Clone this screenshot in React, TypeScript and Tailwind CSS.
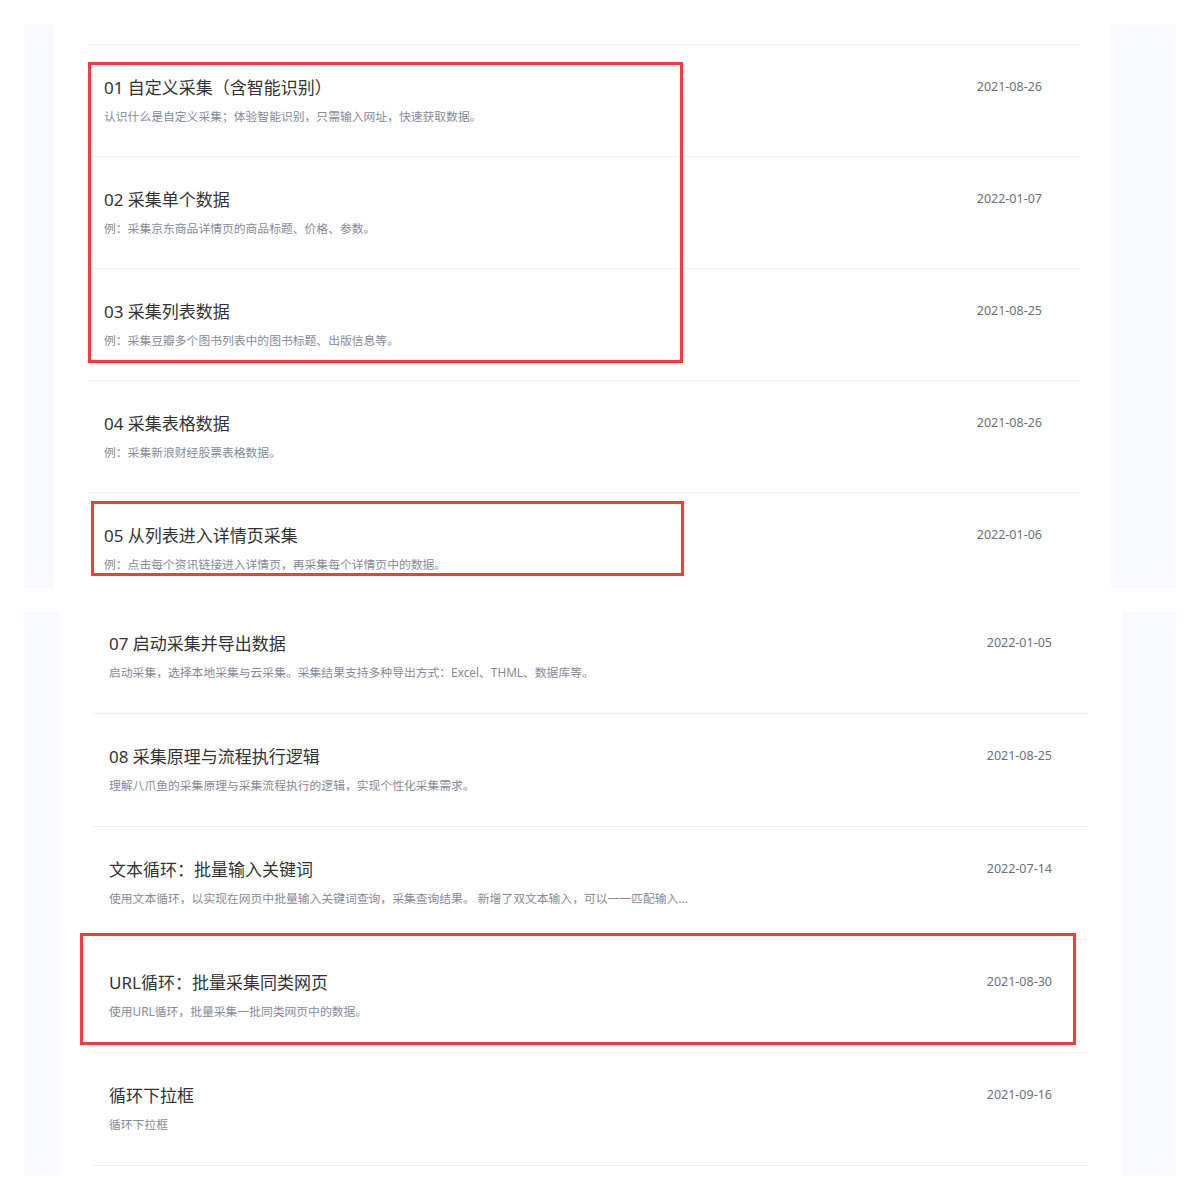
import React from "react";

type Item = { title: string; desc: string; date: string };

const topItems: Item[] = [
  { title: "01 自定义采集（含智能识别）", desc: "认识什么是自定义采集；体验智能识别，只需输入网址，快速获取数据。", date: "2021-08-26" },
  { title: "02 采集单个数据", desc: "例：采集京东商品详情页的商品标题、价格、参数。", date: "2022-01-07" },
  { title: "03 采集列表数据", desc: "例：采集豆瓣多个图书列表中的图书标题、出版信息等。", date: "2021-08-25" },
  { title: "04 采集表格数据", desc: "例：采集新浪财经股票表格数据。", date: "2021-08-26" },
  { title: "05 从列表进入详情页采集", desc: "例：点击每个资讯链接进入详情页，再采集每个详情页中的数据。", date: "2022-01-06" },
];

const bottomItems: Item[] = [
  { title: "07 启动采集并导出数据", desc: "启动采集，选择本地采集与云采集。采集结果支持多种导出方式：Excel、THML、数据库等。", date: "2022-01-05" },
  { title: "08 采集原理与流程执行逻辑", desc: "理解八爪鱼的采集原理与采集流程执行的逻辑，实现个性化采集需求。", date: "2021-08-25" },
  { title: "文本循环：批量输入关键词", desc: "使用文本循环，以实现在网页中批量输入关键词查询，采集查询结果。 新增了双文本输入，可以一一匹配输入...", date: "2022-07-14" },
  { title: "URL循环：批量采集同类网页", desc: "使用URL循环，批量采集一批同类网页中的数据。", date: "2021-08-30" },
  { title: "循环下拉框", desc: "循环下拉框", date: "2021-09-16" },
];

function Row({ item, tall, first }: { item: Item; tall?: boolean; first?: boolean }) {
  return (
    <div
      className={
        (tall ? "h-[113px] pl-[17px] " : "h-[112px] pl-[16px] ") +
        (first ? "border-t border-transparent " : "border-t border-[#f0f2fa] ") +
        "flex justify-between pr-[36px] pt-[31px] shrink-0"
      }
    >
      <div className="flex flex-col">
        <div className="text-[17px] leading-[24px] text-[#333333]">{item.title}</div>
        <div className="mt-[7px] text-[11.8px] leading-[18px] text-[#858a99]">{item.desc}</div>
      </div>
      <div className="text-[12.5px] leading-[22px] text-[#6b7080]">{item.date}</div>
    </div>
  );
}

export default function App() {
  return (
    <div
      className="relative w-[1200px] h-[1200px] bg-white overflow-hidden"
      style={{ fontFamily: '"Noto Sans", "Noto Sans CJK SC", sans-serif' }}
    >
      <div className="flex flex-col gap-[24px] pt-[24px] px-[24px]">
        {/* top panel */}
        <div className="flex h-[564px]">
          <div className="w-[30px] bg-[#f7faff]" />
          <div className="flex-1 bg-white overflow-hidden pl-[34px] pr-[33px] pt-[20px]">
            <div className="flex flex-col">
              {topItems.map((it, i) => (
                <Row key={i} item={it} />
              ))}
            </div>
          </div>
          <div className="w-[65px] bg-[#f7faff]" />
        </div>
        {/* bottom panel */}
        <div className="flex h-[564px]">
          <div className="w-[36px] bg-[#f7faff]" />
          <div className="flex-1 bg-white overflow-hidden pl-[32px] pr-[34px]">
            <div className="flex flex-col -mt-[12px]">
              {bottomItems.map((it, i) => (
                <Row key={i} item={it} tall first={i === 0} />
              ))}
              <div className="border-t border-[#f0f2fa]" />
            </div>
          </div>
          <div className="w-[54px] bg-[#f7faff]" />
        </div>
      </div>

      {/* annotation boxes */}
      <div className="absolute left-[88px] top-[62px] w-[595px] h-[301px] border-[3px] border-[#f23d3d]" />
      <div className="absolute left-[91px] top-[501px] w-[593px] h-[75px] border-[3px] border-[#f23d3d]" />
      <div className="absolute left-[80px] top-[933px] w-[996px] h-[112px] border-[3px] border-[#f23d3d]" />
    </div>
  );
}
